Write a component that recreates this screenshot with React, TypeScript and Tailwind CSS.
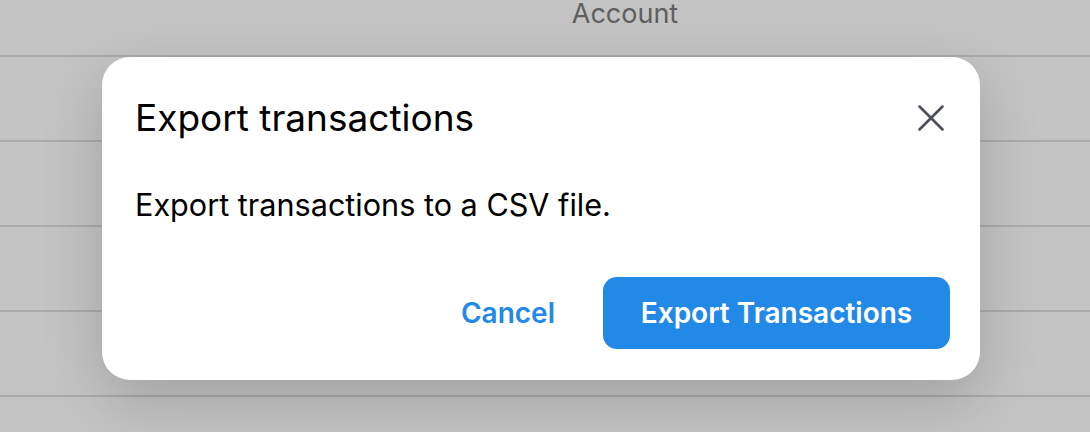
import { X } from 'lucide-react'

const rows = ['', '', '', '']

export default function App() {
  return (
    <div className="relative h-[432px] w-[1090px] overflow-hidden bg-[#c4c4c4] font-['Inter',sans-serif]">
      {/* Background table, dimmed */}
      <div className="flex h-[55px] items-start justify-center pl-[160px]">
        <span className="text-[27px] leading-[28px] text-[#5f5f5f]">Account</span>
      </div>
      {rows.map((_, i) => (
        <div key={i} className="h-[85px] border-t-2 border-[#ababab]" />
      ))}
      <div className="flex h-[40px] justify-center border-t-2 border-[#a8a8a8] pl-[130px] pt-[33px]">
        <span className="text-[24px] leading-[28px] text-[#222]">Landlord</span>
      </div>

      {/* Modal */}
      <div className="absolute left-[102px] top-[57px] flex h-[323px] w-[878px] flex-col rounded-[28px] bg-white pl-[33px] pr-[30px] shadow-[0_20px_60px_rgba(0,0,0,0.18)]">
        <div className="flex items-center justify-between pt-[38px]">
          <h2 className="text-[37px] leading-[44px] text-black">Export transactions</h2>
          <button className="-mr-[4px] text-[#4b5058]" aria-label="Close">
            <X className="h-[46px] w-[46px]" strokeWidth={1.35} />
          </button>
        </div>
        <p className="mt-[44px] text-[30.6px] leading-[40px] text-black">
          Export transactions to a CSV file.
        </p>
        <div className="mt-auto mb-[31px] flex items-center justify-end gap-[48px]">
          <button className="text-[28px] font-semibold text-[#2389e6]">Cancel</button>
          <button className="h-[72px] w-[347px] rounded-[14px] bg-[#2389e6] text-[28px] font-semibold text-white">
            Export Transactions
          </button>
        </div>
      </div>
    </div>
  )
}
